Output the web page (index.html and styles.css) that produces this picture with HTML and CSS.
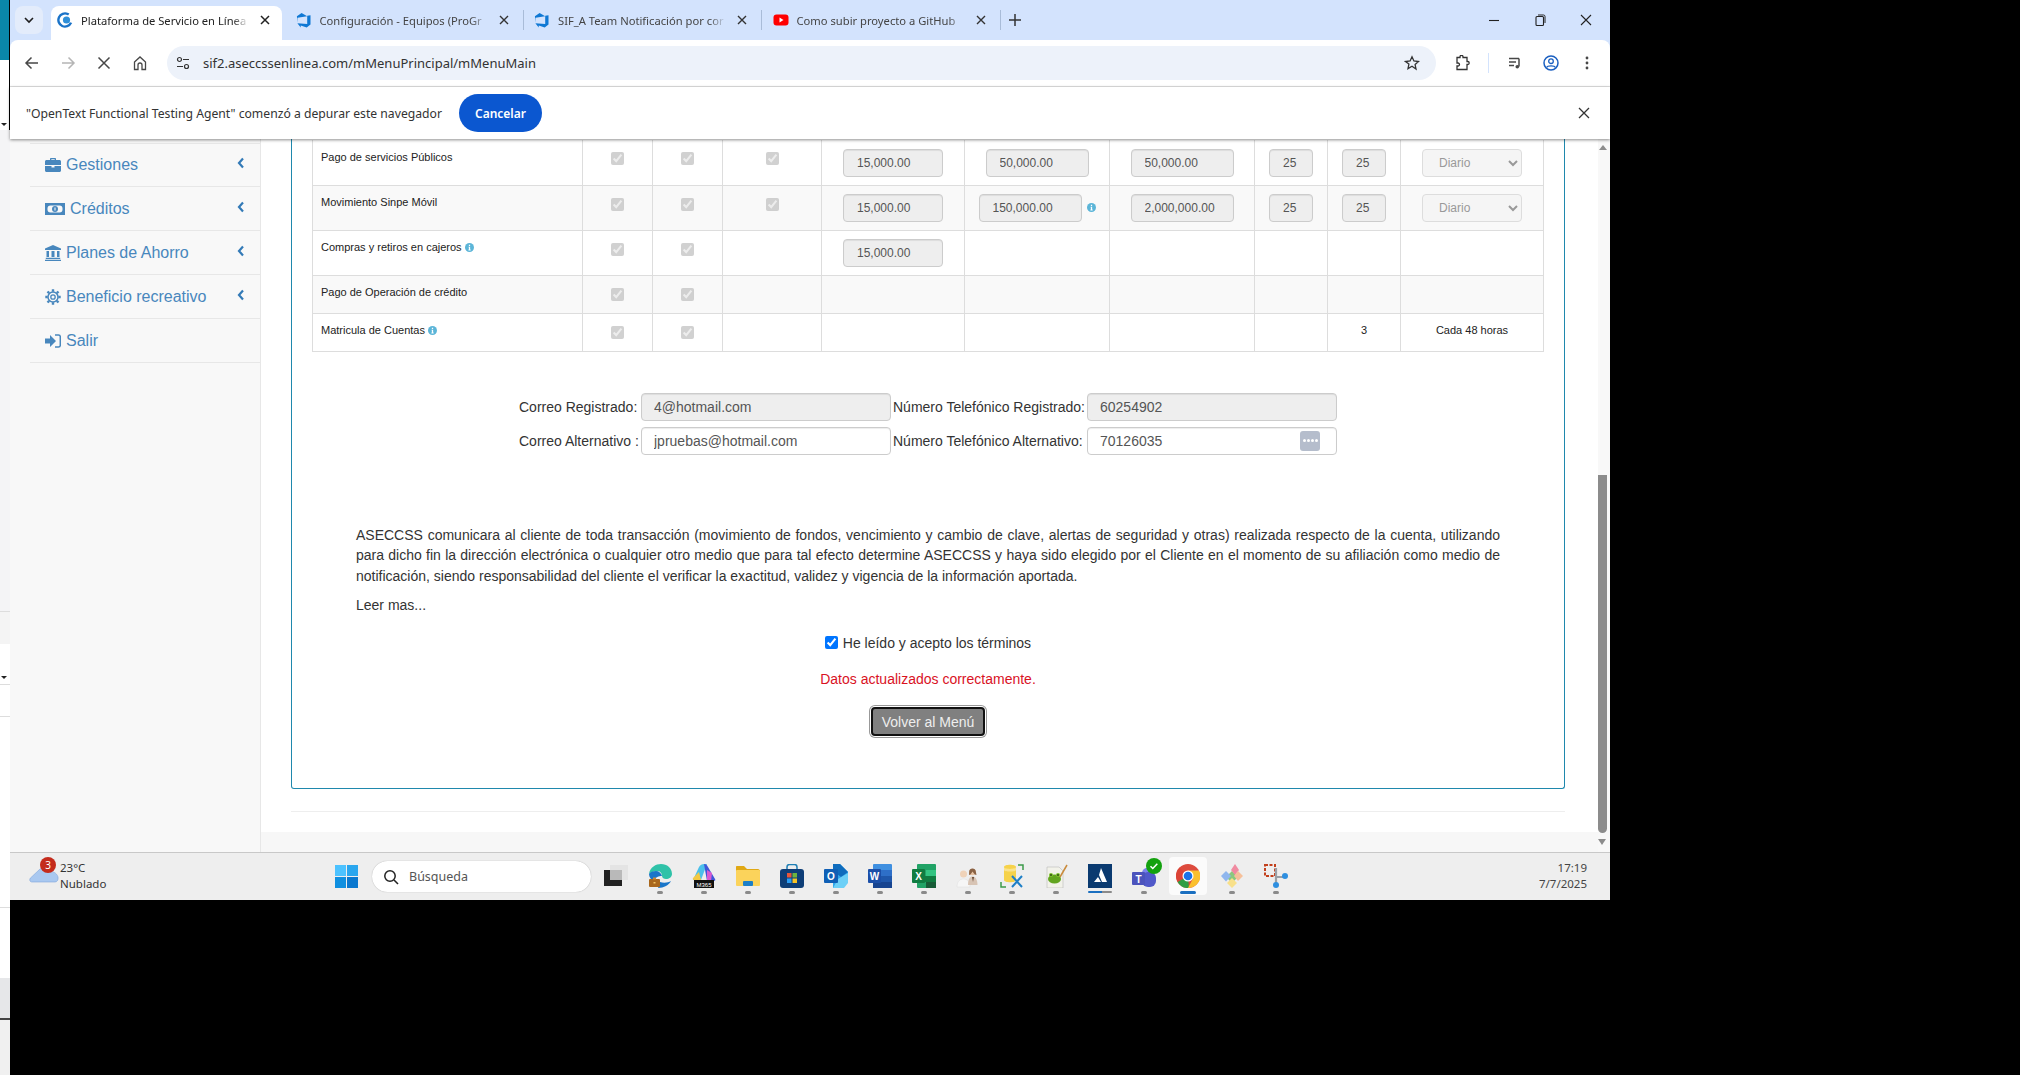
FILE: index.html

```html
<!DOCTYPE html>
<html lang="es">
<head>
  <meta charset="UTF-8" />
  <title>Plataforma de Servicio en Línea</title>
  <link rel="stylesheet" href="styles.css">
</head>
<body>
  <div class="strip">
    <div class="strip-teal"></div>
    <div class="strip-top"><span class="strip-arrow"></span></div>
    <div class="strip-grey"></div>
    <div class="strip-band"></div>
    <div class="strip-white"><span class="strip-arrow"></span></div>
    <div class="strip-box"></div>
    <div class="strip-long"></div>
    <div class="strip-long2"></div>
    <div class="strip-bar"></div>
    <div class="strip-end"></div>
  </div>

  <div class="window">
    <div class="tabstrip">
      <button class="tab-menu"><svg width="12" height="12" viewBox="0 0 12 12"><path d="M2 4l4 4 4-4" fill="none" stroke="#1f1f1f" stroke-width="1.6"/></svg></button>
      <div class="tab active">
        <svg class="fav" viewBox="0 0 16 16"><circle cx="8" cy="8" r="6.6" fill="none" stroke="#1a73c8" stroke-width="2.4" stroke-dasharray="32 9" transform="rotate(25 8 8)"/><circle cx="9.5" cy="8" r="3.6" fill="#2f8fd8"/></svg>
        <span class="tab-title">Plataforma de Servicio en Línea</span>
        <svg class="tab-x" viewBox="0 0 16 16"><path d="M4 4l8 8M12 4l-8 8" stroke="#222" stroke-width="1.5"/></svg>
      </div>
      <span class="tab-sep hidden"></span>
      <div class="tab">
        <svg class="fav" viewBox="0 0 16 16"><path d="M14.5 3.2v9.4l-3.8 3-6-2.2v2.1L1.4 11.3l9.8.8V3.7zM11.2 4.300 5.600 1 .9 4.200v.1L1.500 10.700V5.800z" fill="#0f78d4"/></svg>
        <span class="tab-title">Configuración - Equipos (ProGr</span>
        <svg class="tab-x" viewBox="0 0 16 16"><path d="M4 4l8 8M12 4l-8 8" stroke="#333" stroke-width="1.4"/></svg>
      </div>
      <span class="tab-sep"></span>
      <div class="tab">
        <svg class="fav" viewBox="0 0 16 16"><path d="M14.5 3.2v9.4l-3.8 3-6-2.2v2.1L1.4 11.3l9.8.8V3.7zM11.2 4.300 5.600 1 .9 4.200v.1L1.500 10.700V5.800z" fill="#0f78d4"/></svg>
        <span class="tab-title">SIF_A Team Notificación por cor</span>
        <svg class="tab-x" viewBox="0 0 16 16"><path d="M4 4l8 8M12 4l-8 8" stroke="#333" stroke-width="1.4"/></svg>
      </div>
      <span class="tab-sep"></span>
      <div class="tab">
        <svg class="fav" viewBox="0 0 16 16"><rect x="0.500" y="2.500" width="15" height="11" rx="3" fill="#f00"/><path d="M6.500 5.500v5l4-2.500z" fill="#fff"/></svg>
        <span class="tab-title">Como subir proyecto a GitHub</span>
        <svg class="tab-x" viewBox="0 0 16 16"><path d="M4 4l8 8M12 4l-8 8" stroke="#333" stroke-width="1.4"/></svg>
      </div>
      <span class="tab-sep"></span>
      <svg class="tab-plus" viewBox="0 0 16 16"><path d="M8 2v12M2 8h12" stroke="#333" stroke-width="1.5"/></svg>
      <div class="winctl">
        <svg viewBox="0 0 16 16"><path d="M3 8.500h10" stroke="#222" stroke-width="1.100"/></svg>
        <svg viewBox="0 0 16 16"><rect x="4" y="4.500" width="7.500" height="9" rx="1" fill="none" stroke="#222" stroke-width="1.100"/><path d="M6 3h5.500a1.500 1.500 0 0 1 1.500 1.500V11" fill="none" stroke="#222"/></svg>
        <svg viewBox="0 0 16 16"><path d="M3 3l10 10M13 3L3 13" stroke="#222" stroke-width="1.100"/></svg>
      </div>
    </div>

    <div class="toolbar">
      <button class="tool"><svg viewBox="0 0 16 16"><path d="M14 8H2.500M7.500 2.500L2 8l5.500 5.500" fill="none" stroke="#474747" stroke-width="1.500"/></svg></button>
      <button class="tool"><svg viewBox="0 0 16 16"><path d="M2 8h11.500M8.500 2.500L14 8l-5.500 5.500" fill="none" stroke="#b5b5b5" stroke-width="1.500"/></svg></button>
      <button class="tool"><svg viewBox="0 0 16 16"><path d="M2.500 2.500l11 11M13.500 2.500l-11 11" stroke="#474747" stroke-width="1.500"/></svg></button>
      <button class="tool"><svg viewBox="0 0 16 16"><path d="M2.500 7L8 2l5.500 5v7.500h-3.500V10a2 2 0 0 0-4 0v4.500H2.500z" fill="none" stroke="#474747" stroke-width="1.300"/></svg></button>
      <div class="omnibox">
        <svg class="tune" viewBox="0 0 16 16"><circle cx="4.500" cy="4.500" r="2" fill="none" stroke="#333" stroke-width="1.200"/><path d="M8 4.500h6M2 11.500h6" stroke="#333" stroke-width="1.200"/><circle cx="11.500" cy="11.500" r="2" fill="none" stroke="#333" stroke-width="1.200"/></svg>
        <span class="url">sif2.aseccssenlinea.com/mMenuPrincipal/mMenuMain</span>
        <svg class="star" viewBox="0 0 16 16"><path d="M8 1.800l1.900 4.200 4.600.5-3.400 3.100.9 4.500L8 11.300l-4 2.300.9-4.500L1.500 6.500l4.600-.5z" fill="none" stroke="#333" stroke-width="1.300"/></svg>
      </div>
      <button class="tool ext"><svg viewBox="0 0 16 16"><path d="M3 2.500h3V1.800a1.500 1.500 0 0 1 3 0v.7h4v4h.7a1.500 1.500 0 0 1 0 3H13v5H3v-3.500h1a1.500 1.500 0 0 0 0-3H3z" fill="none" stroke="#333" stroke-width="1.300"/></svg></button>
      <span class="tool-sep"></span>
      <button class="tool media"><svg viewBox="0 0 16 16"><path d="M2 3.500h10M2 7h7M2 10.500h5" stroke="#474747" stroke-width="1.300"/><path d="M12 3.500v8" stroke="#474747" stroke-width="1.500"/><circle cx="10.300" cy="11.800" r="1.800" fill="#474747"/></svg></button>
      <button class="tool"><svg viewBox="0 0 16 16"><circle cx="8" cy="8" r="7" fill="none" stroke="#1a5fc0" stroke-width="1.500"/><circle cx="8" cy="6.200" r="2.300" fill="none" stroke="#1a5fc0" stroke-width="1.300"/><path d="M3.500 12.500c1-2.200 8-2.200 9 0" fill="none" stroke="#1a5fc0" stroke-width="1.300"/></svg></button>
      <button class="tool"><svg viewBox="0 0 16 16"><circle cx="8" cy="3" r="1.400" fill="#474747"/><circle cx="8" cy="8" r="1.400" fill="#474747"/><circle cx="8" cy="13" r="1.400" fill="#474747"/></svg></button>
    </div>

    <div class="infobar">
      <span class="info-text">"OpenText Functional Testing Agent" comenzó a depurar este navegador</span>
      <button class="info-btn">Cancelar</button>
      <svg class="info-x" viewBox="0 0 16 16"><path d="M3 3l10 10M13 3L3 13" stroke="#333" stroke-width="1.300"/></svg>
    </div>

    <div class="viewport">
      <aside class="sidebar">
        <ul class="menu">
          <li>
            <svg class="mi" viewBox="0 0 16 16"><path d="M5 3V1.800C5 1.300 5.300 1 5.800 1h4.400c.5 0 .8.300.8.800V3h3.500c.8 0 1.500.7 1.500 1.500V8H0V4.500C0 3.700.7 3 1.500 3zm1.300 0h3.400V2.300H6.300zM0 9h6.500v1.500h3V9H16v4.500c0 .8-.7 1.500-1.500 1.500h-13C.7 15 0 14.300 0 13.500z"/></svg>
            <span>Gestiones</span>
            <svg class="chev" viewBox="0 0 8 12"><path d="M6 1.500L2 6l4 4.500" fill="none" stroke="#337ab7" stroke-width="2.200"/></svg>
          </li>
          <li class="wide">
            <svg class="mi" viewBox="0 0 20 14"><rect y="1" width="20" height="12"/><rect x="2.500" y="3.500" width="15" height="7" rx="3" fill="#f8f8f8"/><circle cx="10" cy="7" r="3"/><rect x="9.500" y="5.500" width="1" height="3" fill="#fff"/></svg>
            <span>Créditos</span>
            <svg class="chev" viewBox="0 0 8 12"><path d="M6 1.500L2 6l4 4.500" fill="none" stroke="#337ab7" stroke-width="2.200"/></svg>
          </li>
          <li>
            <svg class="mi" viewBox="0 0 16 16"><path d="M8 0l8 3.500V5H0V3.500zM1.500 6H4v6H1.500zM6.500 6h3v6h-3zM12 6h2.500v6H12zM.8 12.800h14.400V14H.8zM0 14.700h16V16H0z"/></svg>
            <span>Planes de Ahorro</span>
            <svg class="chev" viewBox="0 0 8 12"><path d="M6 1.500L2 6l4 4.500" fill="none" stroke="#337ab7" stroke-width="2.200"/></svg>
          </li>
          <li>
            <svg class="mi" viewBox="0 0 16 16"><circle cx="8" cy="8" r="5" fill="none" stroke="currentColor" stroke-width="1.500"/><circle cx="8" cy="8" r="2.200" fill="none" stroke="currentColor" stroke-width="1.300"/><path d="M8 .3v2.400M8 13.300v2.400M.3 8h2.400M13.300 8h2.400M2.500 2.500l1.700 1.700M13.500 13.500l-1.700-1.700M13.500 2.500l-1.700 1.700M2.500 13.500l1.700-1.700" stroke="currentColor" stroke-width="2.400"/></svg>
            <span>Beneficio recreativo</span>
            <svg class="chev" viewBox="0 0 8 12"><path d="M6 1.500L2 6l4 4.500" fill="none" stroke="#337ab7" stroke-width="2.200"/></svg>
          </li>
          <li>
            <svg class="mi" viewBox="0 0 16 16"><path d="M0 5.500h5V2l6 6-6 6v-3.500H0z"/><path d="M10 2h3.500c1 0 1.800.8 1.800 1.800v8.400c0 1-.8 1.800-1.800 1.800H10" fill="none" stroke="currentColor" stroke-width="1.500"/></svg>
            <span>Salir</span>
          </li>
        </ul>
      </aside>

      <div class="content">
        <main class="content-body">
          <div class="panel">
            <table class="limits">
              <colgroup>
                <col class="c-name"><col class="c-chk"><col class="c-chk"><col class="c-chk3"><col class="c-a"><col class="c-b"><col class="c-b"><col class="c-n"><col class="c-n"><col class="c-s">
              </colgroup>
              <tbody>
                <tr class="tall">
                  <td class="name">Pago de servicios Públicos</td>
                  <td><input type="checkbox" checked disabled></td>
                  <td><input type="checkbox" checked disabled></td>
                  <td><input type="checkbox" checked disabled></td>
                  <td><input class="num w100" value="15,000.00" disabled></td>
                  <td><input class="num w103" value="50,000.00" disabled></td>
                  <td><input class="num w103" value="50,000.00" disabled></td>
                  <td><input class="num w44" value="25" disabled></td>
                  <td><input class="num w44" value="25" disabled></td>
                  <td><select class="freq" disabled><option>Diario</option></select></td>
                </tr>
                <tr class="tall odd">
                  <td class="name">Movimiento Sinpe Móvil</td>
                  <td><input type="checkbox" checked disabled></td>
                  <td><input type="checkbox" checked disabled></td>
                  <td><input type="checkbox" checked disabled></td>
                  <td><input class="num w100" value="15,000.00" disabled></td>
                  <td class="with-info"><input class="num w103" value="150,000.00" disabled><svg class="info" viewBox="0 0 10 10"><circle cx="5" cy="5" r="5"/><path d="M4.300 2h1.400v1.300H4.300zM4 4.200h1.700v3.100h.6v.9H3.800v-.9h.5V5.100H4z" fill="#fff"/></svg></td>
                  <td><input class="num w103" value="2,000,000.00" disabled></td>
                  <td><input class="num w44" value="25" disabled></td>
                  <td><input class="num w44" value="25" disabled></td>
                  <td><select class="freq" disabled><option>Diario</option></select></td>
                </tr>
                <tr class="tall">
                  <td class="name">Compras y retiros en cajeros <svg class="info" viewBox="0 0 10 10"><circle cx="5" cy="5" r="5"/><path d="M4.300 2h1.400v1.300H4.300zM4 4.200h1.700v3.100h.6v.9H3.800v-.9h.5V5.100H4z" fill="#fff"/></svg></td>
                  <td><input type="checkbox" checked disabled></td>
                  <td><input type="checkbox" checked disabled></td>
                  <td></td>
                  <td><input class="num w100" value="15,000.00" disabled></td>
                  <td></td><td></td><td></td><td></td><td></td>
                </tr>
                <tr class="short odd">
                  <td class="name">Pago de Operación de crédito</td>
                  <td><input type="checkbox" checked disabled></td>
                  <td><input type="checkbox" checked disabled></td>
                  <td></td><td></td><td></td><td></td><td></td><td></td><td></td>
                </tr>
                <tr class="short">
                  <td class="name">Matricula de Cuentas <svg class="info" viewBox="0 0 10 10"><circle cx="5" cy="5" r="5"/><path d="M4.300 2h1.400v1.300H4.300zM4 4.200h1.700v3.100h.6v.9H3.800v-.9h.5V5.100H4z" fill="#fff"/></svg></td>
                  <td><input type="checkbox" checked disabled></td>
                  <td><input type="checkbox" checked disabled></td>
                  <td></td><td></td><td></td><td></td><td></td>
                  <td class="plain">3</td>
                  <td class="plain">Cada 48 horas</td>
                </tr>
              </tbody>
            </table>

            <div class="contact">
              <label class="lbl">Correo Registrado:</label>
              <input class="field" value="4@hotmail.com" disabled>
              <label class="lbl lbl2">Número Telefónico Registrado:</label>
              <input class="field" value="60254902" disabled>
              <label class="lbl">Correo Alternativo :</label>
              <input class="field" value="jpruebas@hotmail.com">
              <label class="lbl lbl2">Número Telefónico Alternativo:</label>
              <div class="field-wrap">
                <input class="field" value="70126035">
                <span class="pm"><i></i><i></i><i></i><i></i></span>
              </div>
            </div>

            <p class="terms">ASECCSS comunicara al cliente de toda transacción (movimiento de fondos, vencimiento y cambio de clave, alertas de seguridad y otras) realizada respecto de la cuenta, utilizando para dicho fin la dirección electrónica o cualquier otro medio que para tal efecto determine ASECCSS y haya sido elegido por el Cliente en el momento de su afiliación como medio de notificación, siendo responsabilidad del cliente el verificar la exactitud, validez y vigencia de la información aportada.</p>
            <p class="more">Leer mas...</p>
            <div class="accept"><input type="checkbox" checked> He leído y acepto los términos</div>
            <div class="msg">Datos actualizados correctamente.</div>
            <div class="actions"><button class="back-btn">Volver al Menú</button></div>
          </div>
          <div class="rule"></div>
        </main>
        <div class="content-foot"></div>
      </div>

      <div class="scrollbar">
        <span class="arrow-up"></span>
        <span class="thumb"></span>
        <span class="arrow-down"></span>
      </div>
    </div>

    <footer class="taskbar">
      <div class="weather">
        <div class="cloud">
          <svg viewBox="0 0 30 20" width="30" height="20"><path d="M3 19c-2.500 0-3-3-1-4.500L11 6c3-2.500 7-1 8 2 4-.5 9 2 10 6 .5 3-1 5-3 5z" fill="#a9c8f0" stroke="#7fa6dc" stroke-width=".6"/></svg>
          <span class="badge">3</span>
        </div>
        <div class="wtext"><div>23°C</div><div>Nublado</div></div>
      </div>
      <svg class="start" viewBox="0 0 23 23"><rect width="11" height="11" fill="#4cc2ff"/><rect x="12" width="11" height="11" fill="#2aa6ee"/><rect y="12" width="11" height="11" fill="#0f8fe0"/><rect x="12" y="12" width="11" height="11" fill="#0a78cf"/></svg>
      <div class="search">
        <svg viewBox="0 0 16 16"><circle cx="7" cy="7" r="5.200" fill="none" stroke="#222" stroke-width="1.500"/><path d="M11 11l4 4" stroke="#222" stroke-width="1.600"/></svg>
        <span>Búsqueda</span>
      </div>
      <div class="tb-item"><svg viewBox="0 0 24 24"><rect x="6" y="1" width="18" height="15" fill="#e4e4e4"/><rect x="0" y="6" width="18" height="16" fill="#222"/><rect x="6" y="6" width="12" height="10" fill="#b9b9b9"/></svg></div>
      <div class="tb-item on"><svg viewBox="0 0 24 24"><path d="M1 10C2 3 8 0 13 0c6 0 11 4 11 10 0 3-3 5-6 5-2 0-4-1-4-3 0-3-2-5-5-5-4 0-7 2-8 3z" fill="#2fc2a8"/><path d="M1 10c1-2 4-3 7-3 3 0 5 2 6 5-3 0-7 1-8 5-3-1-5-4-5-7z" fill="#1a76c9"/><path d="M10 24c6 0 11-3 13-7-3 2-8 2-11 1z" fill="#1a76c9"/><rect x="1" y="15" width="11" height="8" rx="1" fill="#a9671c"/><rect x="5" y="13.500" width="3" height="2" fill="#c98a3a"/><rect x="5.500" y="18" width="2" height="1.500" fill="#f3c463"/></svg><i></i></div>
      <div class="tb-item on"><svg viewBox="0 0 24 24"><path d="M1 16L7 3c1-2 3-3 5-3h3l-6 16z" fill="#4cc0ea"/><path d="M12 0c2 0 3 1 4 3l7 12c.8 1.200 0 2-1 2h-7z" fill="#3f57d8"/><path d="M7 8l2 8H2c-1 0-1.500-1-1-2z" fill="#f3c943"/><path d="M15 6l5 3-1 8h-4z" fill="#d95bd1"/><rect x="2" y="16" width="20" height="8" fill="#111"/><text x="12" y="22.500" class="m365">M365</text></svg><i></i></div>
      <div class="tb-item on"><svg viewBox="0 0 24 24"><path d="M0 3c0-.6.4-1 1-1h7l3 3h11c1 0 2 1 2 2v2H0z" fill="#e0a814"/><rect y="6" width="24" height="16" rx="1" fill="#fbd35b"/><rect x="7" y="17" width="10" height="5" rx="1" fill="#1c7fc7"/></svg><i></i></div>
      <div class="tb-item on"><svg viewBox="0 0 24 24"><path d="M7 6V3c0-1.500 1-2.500 2.500-2.500h5C16 .5 17 1.500 17 3v3" fill="none" stroke="#1e7fb5" stroke-width="1.500"/><rect y="5" width="24" height="19" rx="3" fill="#0e3e77"/><rect x="7" y="9" width="4.500" height="4.500" fill="#e8563a"/><rect x="12.500" y="9" width="4.500" height="4.500" fill="#6cb33f"/><rect x="7" y="14.500" width="4.500" height="4.500" fill="#2a9df4"/><rect x="12.500" y="14.500" width="4.500" height="4.500" fill="#f7c325"/></svg><i></i></div>
      <div class="tb-item on"><svg viewBox="0 0 24 24"><path d="M9 0h7l8 8v8l-5 8H9z" fill="#2fa6ea"/><path d="M9 0h7l8 8-7 5-8-6z" fill="#0f6cbd"/><path d="M14 15l10-6v10l-4 5H9z" fill="#6dd0f7"/><rect y="5" width="14" height="14" rx="1" fill="#0f5fb5"/><text x="7" y="16" class="tb-letter">O</text></svg><i></i></div>
      <div class="tb-item on"><svg viewBox="0 0 24 24"><rect x="5" y="0" width="19" height="24" rx="1" fill="#3f8fe0"/><rect x="5" y="6" width="19" height="6" fill="#2e6fc8"/><rect x="5" y="12" width="19" height="6" fill="#1f57ab"/><rect x="5" y="18" width="19" height="6" fill="#174490"/><rect y="5" width="13" height="14" rx="1" fill="#1b4fa8"/><text x="6.500" y="16" class="tb-letter">W</text></svg><i></i></div>
      <div class="tb-item on"><svg viewBox="0 0 24 24"><rect x="5" y="0" width="19" height="24" rx="1" fill="#21a366"/><rect x="14" y="6" width="10" height="6" fill="#33c481"/><rect x="5" y="12" width="19" height="6" fill="#107c41"/><rect x="14" y="18" width="10" height="6" fill="#185c37"/><rect y="5" width="13" height="14" rx="1" fill="#107c41"/><text x="6.500" y="16" class="tb-letter">X</text></svg><i></i></div>
      <div class="tb-item on"><svg viewBox="0 0 24 24"><circle cx="7.500" cy="10" r="3.500" fill="#efd2b8"/><path d="M1 23c0-6 3-8 6.500-8s6.500 2 6.500 8z" fill="#f6f6f6" stroke="#ddd" stroke-width=".5"/><circle cx="16.500" cy="8" r="3.300" fill="#e8c4a4"/><path d="M13.200 7.500c0-4 6.600-4 6.600 0l.7 3.500-1.700-.5-2.300-3-2 3-1.500.5z" fill="#8a6244"/><path d="M12 21c0-6 2-8.500 4.500-8.500S21.500 15 21.500 21z" fill="#d8c4b4"/><path d="M16 13l1 5 1-5z" fill="#6a4a34"/></svg><i></i></div>
      <div class="tb-item on"><svg viewBox="0 0 24 24"><path d="M4 3c0-3 12-3 12 0v13c0 3-12 3-12 0z" fill="#f6d24a"/><path d="M4 3c0 2.500 12 2.500 12 0v3c0 2-12 2-12 0z" fill="#fae28a"/><path d="M18 1h5v5M1 18v5h5" fill="none" stroke="#3c9a4a" stroke-width="1.500"/><path d="M12 12l10 11M22 12L12 23" stroke="#1e7fc7" stroke-width="2"/></svg><i></i></div>
      <div class="tb-item on"><svg viewBox="0 0 24 24"><path d="M3 3h12l4 4v17H3z" fill="#f2f2ea" stroke="#bbb" stroke-width=".6"/><ellipse cx="10.500" cy="15" rx="6.500" ry="4.500" fill="#62a51f"/><circle cx="7" cy="11" r="2" fill="#7cc22c"/><circle cx="14" cy="11" r="2" fill="#7cc22c"/><circle cx="7" cy="11" r=".8"/><circle cx="14" cy="11" r=".8"/><path d="M16 13L23 1" stroke="#c98a3a" stroke-width="1.500"/></svg><i></i></div>
      <div class="tb-item on2"><svg viewBox="0 0 24 24"><rect width="24" height="24" fill="#0a3a70"/><path d="M13 4l6 14h-5l-3-7zM10 13l3 5H6z" fill="#fff"/></svg><i></i></div>
      <div class="tb-item on"><svg viewBox="0 0 24 24"><circle cx="15" cy="9" r="5" fill="#7b83eb"/><rect x="10" y="8" width="14" height="15" rx="6" fill="#5059c9"/><rect y="8" width="13" height="13" rx="1" fill="#4b53bc"/><text x="6.500" y="18.500" class="tb-letter">T</text></svg><span class="tb-check"><svg viewBox="0 0 16 16"><circle cx="8" cy="8" r="8" fill="#13a10e"/><path d="M4.500 8.200l2.300 2.300 4.500-4.700" fill="none" stroke="#fff" stroke-width="1.500"/></svg></span><i></i></div>
      <div class="tb-item active"><svg viewBox="0 0 24 24"><circle cx="12" cy="12" r="12" fill="#dd4b3e"/><path d="M12 12L1.600 18A12 12 0 0 1 3.500 3.500z" fill="#db4437"/><path d="M1.600 18L12 12l1 12A12 12 0 0 1 1.600 18z" fill="#2f9e44"/><path d="M12 6.500h10.900A12 12 0 0 1 12 24l5-9.500z" fill="#fbc02d"/><circle cx="12" cy="12" r="5.500" fill="#fff"/><circle cx="12" cy="12" r="4.300" fill="#1a73e8"/></svg><i></i></div>
      <div class="tb-item on"><svg viewBox="0 0 24 24"><path d="M12 7l6 6-6 6-6-6z" fill="#8bc87f"/><path d="M6 7l5 5-5 5.500L1 12z" fill="#8fb6ee"/><path d="M12 14l5 5-5 5-5-5z" fill="#f8e08a"/><path d="M15 0l4 6-4 5-4-5z" fill="#f08aa0"/><path d="M18 7l5 5-5 5-4-5z" fill="#f6c09a"/></svg><i></i></div>
      <div class="tb-item on"><svg viewBox="0 0 24 24"><rect x="1" y="1" width="10" height="11" fill="none" stroke="#c2401c" stroke-width="2" stroke-dasharray="3 1.500"/><path d="M12 4v15M12 13h9" stroke="#9aa0a6" stroke-width="2.200"/><circle cx="21" cy="12" r="3" fill="#2f8fe0"/><circle cx="12" cy="21" r="3" fill="#2f8fe0"/></svg><i></i></div>
      <div class="clock"><div>17:19</div><div>7/7/2025</div></div>
    </footer>
  </div>
</body>
</html>
```

FILE: styles.css

```css
* {
  box-sizing: border-box;
}
html, body {
  margin: 0;
  padding: 0;
  height: 1075px;
  overflow: hidden;
  background: #000;
}
body {
  display: flex;
  font-family: "Liberation Sans", Arial, sans-serif;
  color: #333;
}
button {
  border: 0;
  padding: 0;
  background: none;
  font: inherit;
}

/* left edge of the window behind */
.strip {
  width: 10px;
  height: 1075px;
  display: flex;
  flex-direction: column;
  flex-shrink: 0;
}
.strip-teal {
  height: 60px;
  background: #0a87a9;
  border-right: 1px solid #000;
}
.strip-top {
  height: 70px;
  background: #fff;
  border-right: 1px solid #000;
  display: flex;
  align-items: flex-end;
  padding-bottom: 4px;
}
.strip-arrow {
  border: 3px solid transparent;
  border-top: 3px solid #222;
  border-bottom: 0;
  margin-left: 1px;
}
.strip-grey {
  height: 482px;
  background: #f4f4f6;
  border-bottom: 1px solid #ddd;
}
.strip-band {
  height: 32px;
  background: #f4f4f4;
}
.strip-white {
  height: 40px;
  background: #fff;
  display: flex;
  align-items: flex-end;
  padding-bottom: 5px;
}
.strip-box {
  height: 33px;
  background: #fff;
  border-top: 1px solid #ddd;
  border-bottom: 1px solid #ddd;
}
.strip-long {
  height: 191px;
  background: #fff;
  border-bottom: 1px solid #ddd;
}
.strip-long2 {
  height: 70px;
  background: #fff;
}
.strip-bar {
  height: 42px;
  background: #e6e7e9;
  border-bottom: 2px solid #444;
}
.strip-end {
  height: 55px;
  background: #f0f0f0;
}

.window {
  width: 1600px;
  height: 900px;
  flex-shrink: 0;
  display: flex;
  flex-direction: column;
  background: #d3e3fd;
  font-family: "Noto Sans", sans-serif;
}

/* tab strip */
.tabstrip {
  height: 40px;
  background: #d3e3fd;
  display: flex;
  align-items: flex-end;
  padding-left: 5px;
}
.tab-menu {
  width: 28px;
  height: 28px;
  margin: 0 8px 6px 0;
  border-radius: 8px;
  background: #e3ecfb;
  display: flex;
  align-items: center;
  justify-content: center;
}
.tab {
  width: 231px;
  height: 34px;
  padding: 0 9px 6px 6px;
  display: flex;
  align-items: center;
  border-radius: 8px 8px 0 0;
  font-size: 11.200px;
  color: #444;
}
.tab.active {
  background: #fff;
  color: #222;
}
.fav {
  width: 16px;
  height: 16px;
  flex-shrink: 0;
  margin-right: 8px;
}
.tab-title {
  flex: 1;
  min-width: 0;
  white-space: nowrap;
  -webkit-mask-image: linear-gradient(to right, #000 90%, transparent);
  mask-image: linear-gradient(to right, #000 90%, transparent);
}
.tab-x {
  width: 16px;
  height: 16px;
  margin-left: 8px;
  flex-shrink: 0;
}
.tab-sep {
  width: 1px;
  height: 20px;
  margin: 0 4.500px 10px 2px;
  background: #a9bcd8;
}
.tab-sep.hidden {
  visibility: hidden;
}
.tab-plus {
  width: 16px;
  height: 16px;
  margin: 0 0 12px 2px;
}
.winctl {
  margin-left: auto;
  display: flex;
  align-self: center;
  margin-right: 1px;
}
.winctl svg {
  width: 46px;
  height: 16px;
}

/* toolbar */
.toolbar {
  height: 47px;
  background: #fff;
  border-bottom: 1px solid #e2e2e2;
  border-radius: 8px 8px 0 0;
  display: flex;
  align-items: center;
  padding-left: 4px;
}
.tool {
  width: 36px;
  height: 34px;
  display: flex;
  align-items: center;
  justify-content: center;
  flex-shrink: 0;
}
.tool svg {
  width: 16px;
  height: 16px;
}
.omnibox {
  width: 1269px;
  height: 34px;
  margin-left: 9px;
  border-radius: 17px;
  background: #edf2fa;
  display: flex;
  align-items: center;
  padding: 0 16px 0 8px;
  flex-shrink: 0;
}
.tune {
  width: 16px;
  height: 16px;
  margin-right: 12px;
}
.url {
  font-size: 13px;
  color: #333;
}
.star {
  width: 16px;
  height: 16px;
  margin-left: auto;
}
.ext {
  margin-left: 8px;
}
.tool-sep {
  width: 1px;
  height: 20px;
  margin-left: 8px;
  background: #d3e3fd;
}
.media {
  margin-left: 8px;
}

/* debugger infobar */
.infobar {
  height: 52px;
  position: relative;
  z-index: 2;
  background: #fff;
  box-shadow: 0 1px 3px rgba(0, 0, 0, .45);
  display: flex;
  align-items: center;
  padding: 0 18px 0 16px;
  font-size: 12.200px;
  color: #333;
}
.info-btn {
  width: 83px;
  height: 38px;
  margin-left: 17px;
  border-radius: 19px;
  background: #0b57d0;
  color: #fff;
  font-weight: 600;
  font-size: 12px;
}
.info-x {
  width: 16px;
  height: 16px;
  margin-left: auto;
}

/* page */
.viewport {
  height: 713px;
  display: flex;
  font-family: "Liberation Sans", Arial, sans-serif;
}
.sidebar {
  width: 251px;
  flex-shrink: 0;
  background: #f8f8f8;
  border-right: 1px solid #e7e7e7;
  padding: 4px 0 0 20px;
}
.menu {
  list-style: none;
  margin: 0;
  padding: 0;
  border-top: 1px solid #e7e7e7;
}
.menu li {
  height: 44px;
  display: flex;
  align-items: center;
  padding: 0 15px 0 15px;
  border-bottom: 1px solid #e7e7e7;
  font-size: 16px;
  color: #4887bd;
}
.menu li:first-child {
  height: 43px;
}
.mi {
  width: 16px;
  height: 16px;
  margin-right: 5px;
  fill: currentColor;
  flex-shrink: 0;
}
.menu li.wide .mi {
  width: 20px;
  margin-right: 5px;
}
.chev {
  width: 8px;
  height: 12px;
  margin-left: auto;
  margin-top: -4px;
}
.content {
  flex: 1;
  min-width: 0;
  display: flex;
  flex-direction: column;
}
.content-body {
  flex: 1;
  min-height: 0;
  overflow: hidden;
  background: #fff;
  padding: 0 33px 0 30px;
}
.content-foot {
  height: 20px;
  background: #f7f7f7;
}
.panel {
  height: 650px;
  border: 1px solid #1f88ad;
  border-top: 0;
  border-radius: 0 0 3px 3px;
  padding: 1px 20px 0;
}
.rule {
  height: 1px;
  margin-top: 22px;
  background: #eee;
}

/* limits table */
.limits {
  width: 1231px;
  table-layout: fixed;
  border-collapse: collapse;
  font-size: 11px;
  color: #222;
}
.c-name { width: 270px; }
.c-chk { width: 70px; }
.c-chk3 { width: 99px; }
.c-a { width: 143px; }
.c-b { width: 145px; }
.c-n { width: 73px; }
.c-s { width: 143px; }
.limits td {
  border: 1px solid #ddd;
  padding: 8px 0 0;
  vertical-align: top;
  text-align: center;
}
.limits tr:first-child td {
  border-top: 0;
}
.limits tr:first-child .num,
.limits tr:first-child .freq {
  margin-top: 1px;
}
.limits tr.tall td {
  height: 45px;
}
.limits tr.short td {
  height: 38px;
}
.limits tr.odd td {
  background: #f9f9f9;
}
.limits td.name {
  text-align: left;
  padding: 7px 0 0 8px;
  line-height: 18px;
}
.limits tr:first-child td.name {
  padding-top: 8px;
}
.limits td.plain {
  padding-top: 7px;
  line-height: 18px;
}
.limits input[type=checkbox] {
  width: 13px;
  height: 13px;
  margin: 4px 0 0;
}
.info {
  width: 9px;
  height: 9px;
  fill: #5bb5d8;
  vertical-align: -1px;
}
.num {
  height: 28px;
  padding: 0 0 0 13px;
  display: block;
  margin: 0 auto;
  background: #eee;
  border: 1px solid #ccc;
  border-radius: 4px;
  box-shadow: inset 0 1px 1px rgba(0, 0, 0, .075);
  font: 12px "Liberation Sans", Arial, sans-serif;
  color: #555;
  -webkit-text-fill-color: #555;
  opacity: 1;
}
.w100 { width: 100px; }
.w103 { width: 103px; }
.w44 { width: 44px; }
.with-info .num {
  display: inline-block;
  margin: 0 5px 0 0;
  vertical-align: middle;
}
.with-info .info {
  vertical-align: middle;
}
.freq {
  width: 100px;
  height: 28px;
  display: block;
  margin: 0 auto;
  padding-left: 12px;
  background: #f5f5f5;
  border: 1px solid #ddd;
  border-radius: 4px;
  font: 12px "Liberation Sans", Arial, sans-serif;
  color: #999;
  opacity: 1;
}

/* contact fields */
.contact {
  display: grid;
  grid-template-columns: 122px 250px 196px 250px;
  grid-auto-rows: 28px;
  row-gap: 6px;
  justify-content: center;
  margin-top: 41px;
  font-size: 14px;
  color: #333;
}
.lbl {
  line-height: 28px;
  white-space: nowrap;
}
.lbl2 {
  padding-left: 2px;
}
.field {
  width: 250px;
  height: 28px;
  padding: 0 12px;
  background: #fff;
  border: 1px solid #ccc;
  border-radius: 4px;
  box-shadow: inset 0 1px 1px rgba(0, 0, 0, .075);
  font: 14px "Liberation Sans", Arial, sans-serif;
  color: #555;
}
.field:disabled {
  background: #eee;
  -webkit-text-fill-color: #555;
  opacity: 1;
}
.field-wrap {
  position: relative;
}
.pm {
  position: absolute;
  right: 17px;
  top: 4px;
  width: 20px;
  height: 20px;
  background: #b5bdcc;
  border-radius: 3px;
  display: flex;
  align-items: center;
  justify-content: center;
  gap: 1px;
}
.pm i {
  width: 3px;
  height: 3px;
  border-radius: 50%;
  background: #fff;
}

/* terms */
.terms {
  margin: 70px 44px 0;
  font-size: 14px;
  line-height: 20.500px;
  text-align: justify;
  color: #333;
}
.more {
  margin: 9px 44px 0;
  font-size: 14px;
  line-height: 20px;
}
.accept {
  margin-top: 18px;
  text-align: center;
  font-size: 14px;
  line-height: 20px;
}
.accept input {
  width: 13px;
  height: 13px;
  margin: 0 1px 0 0;
  vertical-align: -1px;
}
.msg {
  margin-top: 16px;
  text-align: center;
  font-size: 14px;
  line-height: 20px;
  color: #d9121f;
}
.actions {
  margin-top: 18px;
  text-align: center;
}
.back-btn {
  width: 114px;
  height: 29px;
  border: 2px solid #111;
  border-radius: 4px;
  background: #808080;
  box-shadow: 0 0 0 1px #fff, 0 0 0 2px #999;
  color: #eee;
  font-size: 14px;
}

/* scrollbar */
.scrollbar {
  width: 12px;
  flex-shrink: 0;
  background: #f8f8f8;
  display: flex;
  flex-direction: column;
  align-items: flex-start;
}
.arrow-up {
  margin: 6px 0 0 1px;
  border: 4px solid transparent;
  border-bottom: 5px solid #8c8c8c;
  border-top: 0;
}
.thumb {
  width: 9px;
  height: 358px;
  margin-top: 325px;
  background: #8c8c8c;
  border-radius: 0 0 5px 5px;
}
.arrow-down {
  margin: 6px 0 0 0;
  border: 4.500px solid transparent;
  border-top: 6px solid #8c8c8c;
  border-bottom: 0;
}

/* taskbar */
.taskbar {
  height: 48px;
  background: #eee;
  border-top: 1px solid #c8c8c8;
  display: flex;
  align-items: flex-start;
  font-family: "Noto Sans", sans-serif;
  color: #333;
}
.weather {
  width: 325px;
  flex-shrink: 0;
  display: flex;
  padding: 7px 0 0 19px;
}
.cloud {
  position: relative;
  width: 31px;
  height: 28px;
  padding-top: 3px;
}
.badge {
  position: absolute;
  left: 11px;
  top: -3px;
  width: 16px;
  height: 16px;
  border-radius: 50%;
  background: #c42b1c;
  color: #fff;
  font-size: 10px;
  line-height: 16px;
  text-align: center;
}
.wtext {
  font-size: 11.500px;
  line-height: 16px;
  color: #333;
}
.start {
  width: 23px;
  height: 23px;
  margin: 12px 14px 0 0;
  flex-shrink: 0;
}
.search {
  width: 219px;
  height: 31px;
  margin: 8px 3px 0 0;
  border-radius: 16px;
  background: #fff;
  box-shadow: 0 0 1px rgba(0, 0, 0, .35);
  display: flex;
  align-items: center;
  padding-left: 11px;
  font-size: 12.500px;
  color: #555;
  flex-shrink: 0;
}
.search svg {
  width: 16px;
  height: 16px;
  margin-right: 10px;
}
.tb-item {
  position: relative;
  width: 44px;
  height: 47px;
  padding-top: 11px;
  display: flex;
  flex-direction: column;
  align-items: center;
  flex-shrink: 0;
}
.tb-item svg {
  width: 24px;
  height: 24px;
  position: relative;
}
.tb-item i {
  width: 6px;
  height: 3px;
  margin-top: 3px;
  border-radius: 2px;
  background: #8a8a8a;
}
.tb-item.on2 i {
  width: 24px;
  height: 2px;
  background: linear-gradient(to right, #1a6fc0 60%, #8a8a8a 60%);
}
.tb-item.active i {
  width: 16px;
  background: #1a6fc0;
  position: relative;
}
.tb-item.active::before {
  content: "";
  position: absolute;
  left: 3px;
  top: 4px;
  width: 38px;
  height: 38px;
  background: #fbfbfb;
  border-radius: 4px;
}
.tb-check {
  position: absolute;
  left: 24px;
  top: 5px;
  width: 16px;
  height: 16px;
}
.tb-check svg {
  display: block;
  width: 16px;
  height: 16px;
}
.tb-letter {
  font: bold 10px "Liberation Sans", Arial, sans-serif;
  fill: #fff;
  text-anchor: middle;
}
.m365 {
  font: 6px "Liberation Sans", Arial, sans-serif;
  fill: #fff;
  text-anchor: middle;
}
.clock {
  margin-left: auto;
  padding: 7px 23px 0 0;
  text-align: right;
  font-size: 11.500px;
  line-height: 16px;
  color: #444;
}
```
